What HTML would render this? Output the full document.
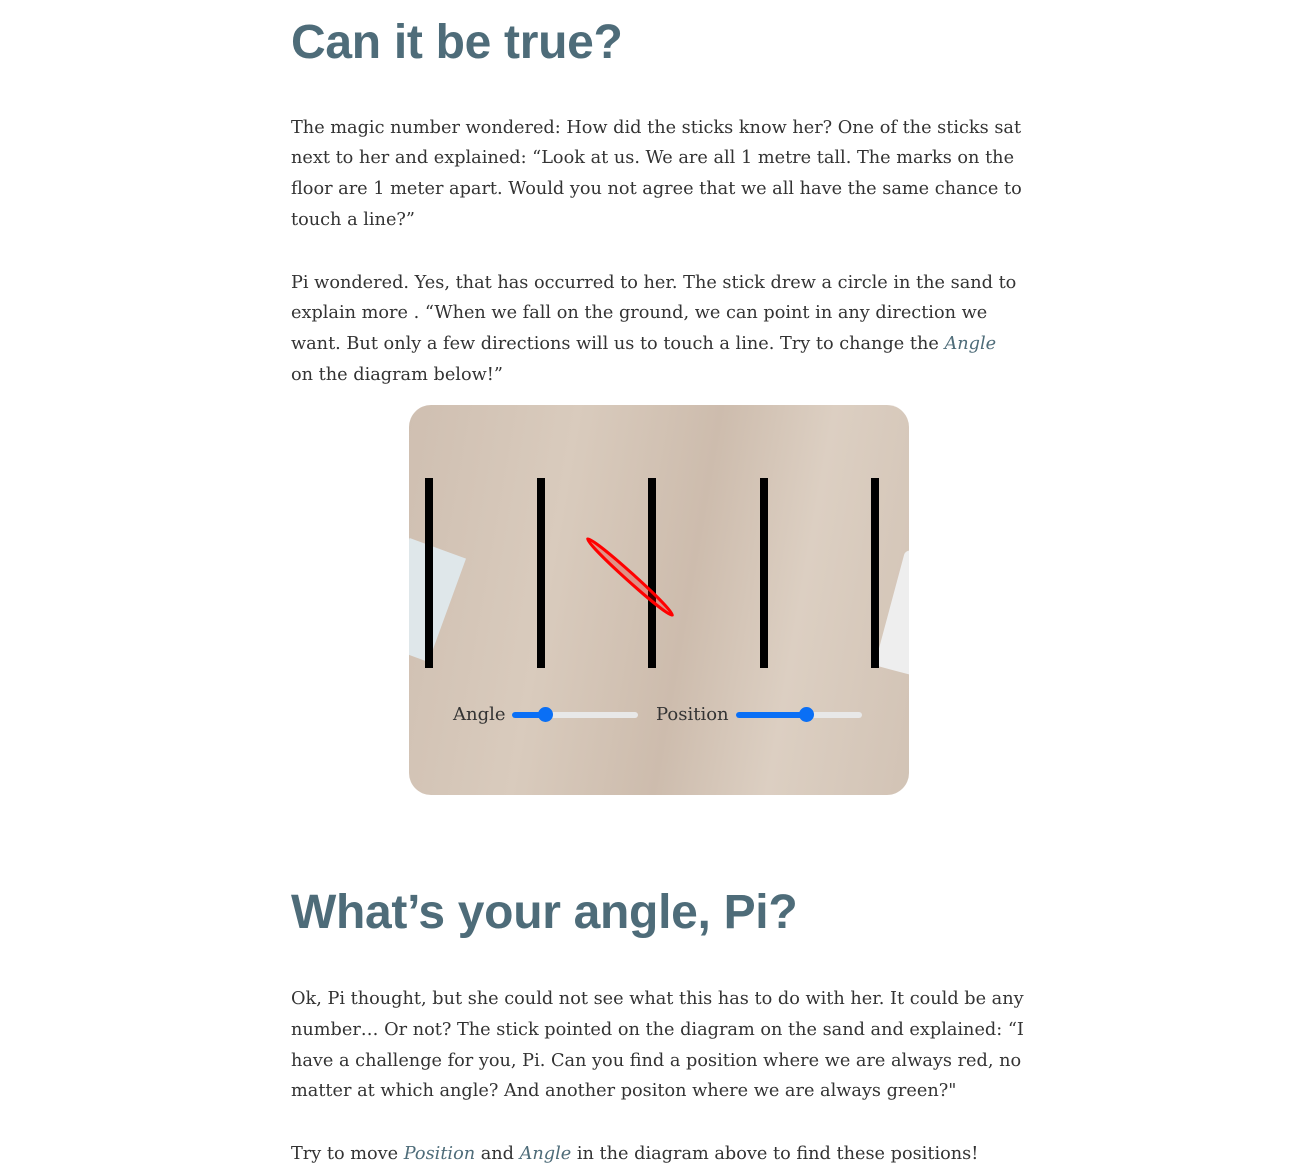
<!DOCTYPE html>
<html><head><meta charset="utf-8"><style>
body{margin:0;width:1314px;height:1174px;background:#fff;position:relative;overflow:hidden;}
.h{position:absolute;left:291px;font-family:"Liberation Sans",sans-serif;font-weight:bold;color:#4e6c79;font-size:48px;letter-spacing:-0.3px;white-space:nowrap;}
.l{position:absolute;left:291px;font-family:"DejaVu Serif",serif;font-size:17.7px;color:#333;white-space:nowrap;line-height:20px;}
.l i{color:#4e6c79;}
.box{position:absolute;left:409px;top:405px;width:500px;height:390px;border-radius:22px;overflow:hidden;
background:linear-gradient(100deg,#cfbfb1 0%,#d9cbbd 30%,#cdbcad 55%,#dccfc2 75%,#d2c3b5 100%);}
.st{position:absolute;top:73px;width:8px;height:190px;background:#000;}
.lab{position:absolute;top:299px;font-family:"DejaVu Serif",serif;font-size:18px;color:#333;}
.tr{position:absolute;top:307px;height:6px;border-radius:3px;background:#e8e8e8;}
.fi{position:absolute;top:307px;height:6px;border-radius:3px;background:#0a6ff5;}
.th{position:absolute;top:302px;width:15px;height:15px;border-radius:50%;background:#0a6ff5;}
</style></head><body>
<div class="h" style="top:15px">Can it be true?</div>
<div class="l" style="top:118px">The magic number wondered: How did the sticks know her? One of the sticks sat</div>
<div class="l" style="top:148px">next to her and explained: “Look at us. We are all 1 metre tall. The marks on the</div>
<div class="l" style="top:179px">floor are 1 meter apart. Would you not agree that we all have the same chance to</div>
<div class="l" style="top:210px">touch a line?”</div>
<div class="l" style="top:273px">Pi wondered. Yes, that has occurred to her. The stick drew a circle in the sand to</div>
<div class="l" style="top:303px">explain more . “When we fall on the ground, we can point in any direction we</div>
<div class="l" style="top:334px">want. But only a few directions will us to touch a line. Try to change the <i>Angle</i></div>
<div class="l" style="top:365px">on the diagram below!”</div>
<div class="box">
 <div style="position:absolute;left:-20px;top:140px;width:60px;height:110px;background:#dfe7ea;transform:rotate(20deg)"></div>
 <div style="position:absolute;left:480px;top:150px;width:60px;height:120px;background:#eeeeee;border-radius:6px;transform:rotate(15deg)"></div>
 <div class="st" style="left:16px"></div><div class="st" style="left:128px"></div><div class="st" style="left:239px"></div><div class="st" style="left:351px"></div><div class="st" style="left:462px"></div>
 <svg style="position:absolute;left:0;top:0" width="500" height="390"><ellipse cx="221" cy="172" rx="57" ry="4" transform="rotate(42 221 172)" fill="rgba(255,0,0,0.25)" stroke="#f00" stroke-width="3"/></svg>
 <div class="lab" style="left:44px">Angle</div>
 <div class="tr" style="left:103px;width:126px"></div><div class="fi" style="left:103px;width:35px"></div><div class="th" style="left:129px"></div>
 <div class="lab" style="left:247px">Position</div>
 <div class="tr" style="left:327px;width:126px"></div><div class="fi" style="left:327px;width:72px"></div><div class="th" style="left:390px"></div>
</div>
<div class="h" style="top:885px">What’s your angle, Pi?</div>
<div class="l" style="top:989px">Ok, Pi thought, but she could not see what this has to do with her. It could be any</div>
<div class="l" style="top:1020px">number… Or not? The stick pointed on the diagram on the sand and explained: “I</div>
<div class="l" style="top:1051px">have a challenge for you, Pi. Can you find a position where we are always red, no</div>
<div class="l" style="top:1081px">matter at which angle? And another positon where we are always green?"</div>
<div class="l" style="top:1144px">Try to move <i>Position</i> and <i>Angle</i> in the diagram above to find these positions!</div>
</body></html>
